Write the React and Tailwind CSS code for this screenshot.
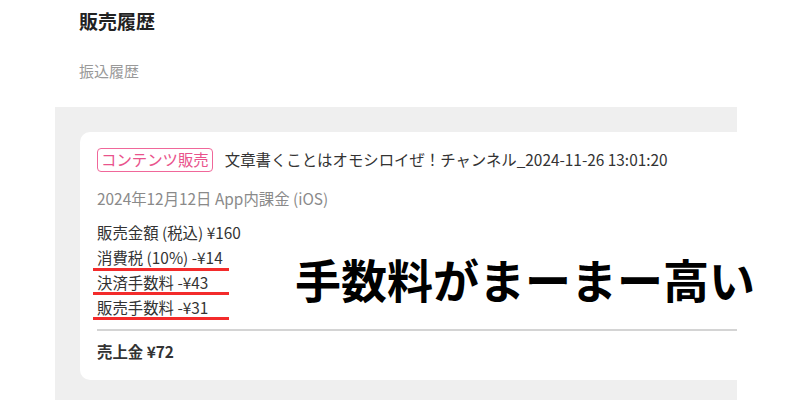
export default function App() {
  const font = { fontFamily: '"Noto Sans CJK JP", "Noto Sans", sans-serif' };
  return (
    <div className="relative w-[800px] h-[400px] overflow-hidden bg-white" style={font}>
      <div className="pl-[79px] pt-[7px]">
        <div className="text-[19px] leading-[28px] font-bold text-[#222]">販売履歴</div>
        <div className="mt-[24px] text-[15px] leading-[24px] text-[#999]">振込履歴</div>
      </div>
      <div className="mt-[24px] ml-[55px] w-[682px] h-[300px] bg-[#efefef] overflow-hidden pl-[25px] pt-[25px]">
        <div className="w-[700px] h-[248px] bg-white rounded-[10px] pl-[17px] pt-[16px] text-[15.4px] text-[#333]">
          <div className="flex items-center h-[24px]">
            <span className="h-[24px] px-[3px] flex items-center border-[1.5px] border-[#f0679a] rounded-[4px] text-[#e9538c] leading-none">
              コンテンツ販売
            </span>
            <span className="ml-[12px] leading-none whitespace-nowrap">
              文章書くことはオモシロイぜ！チャンネル_2024-11-26 13:01:20
            </span>
          </div>
          <div className="mt-[14px] h-[25px] leading-[25px] text-[#8a8a8a]">2024年12月12日 App内課金 (iOS)</div>
          <div className="mt-[8px] h-[26px] leading-[26px]">販売金額 (税込) ¥160</div>
          <div className="relative h-[25px] leading-[25px]">
            消費税 (10%) -¥14
            <span className="absolute left-[-4px] bottom-[-1px] w-[136px] h-[3px] bg-[#f32b2b]" />
          </div>
          <div className="relative h-[25px] leading-[25px]">
            決済手数料 -¥43
            <span className="absolute left-[-4px] bottom-0 w-[136px] h-[3px] bg-[#f32b2b]" />
          </div>
          <div className="relative h-[25px] leading-[25px]">
            販売手数料 -¥31
            <span className="absolute left-[-4px] bottom-0 w-[136px] h-[3px] bg-[#f32b2b]" />
          </div>
          <div className="mt-[9px] h-[2px] bg-[#d4d4d4]" />
          <div className="mt-[8px] h-[25px] leading-[25px] font-bold">売上金 ¥72</div>
        </div>
      </div>
      <div className="absolute left-[295px] top-[255px] text-[46px] leading-none font-bold text-black whitespace-nowrap">
        手数料がまーまー高い
      </div>
    </div>
  );
}
